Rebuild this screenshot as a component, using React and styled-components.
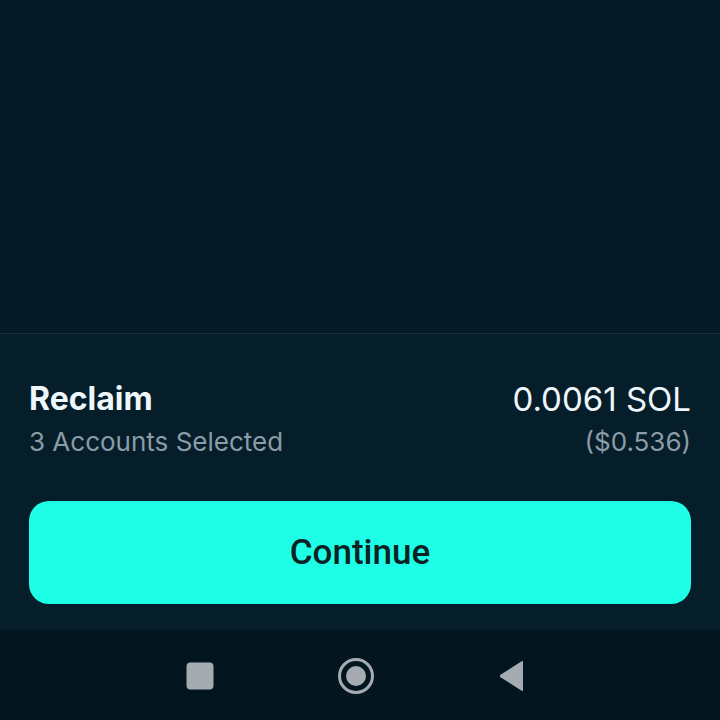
import React from 'react'
import styled, { createGlobalStyle } from 'styled-components'

const GlobalStyle = createGlobalStyle`
  html, body {
    margin: 0;
    padding: 0;
    background: #031922;
  }
  #root {
    height: 720px;
  }
`

const Screen = styled.div`
  width: 720px;
  height: 720px;
  display: flex;
  flex-direction: column;
  font-family: Inter, 'Noto Sans', sans-serif;
  background: #031922;
  overflow: hidden;
`

const Backdrop = styled.div`
  height: 333px;
  background: #041a25;
`

const Sheet = styled.div`
  flex: 1;
  background: #061d2a;
  border-top: 1px solid #14303c;
  padding: 46px 29px 0;
  display: flex;
  flex-direction: column;
`

const SummaryRow = styled.div`
  display: flex;
  justify-content: space-between;
  align-items: flex-start;
`

const Column = styled.div`
  display: flex;
  flex-direction: column;
  align-items: ${p => (p.$right ? 'flex-end' : 'flex-start')};
  gap: 9px;
`

const Title = styled.div`
  color: #eef7fb;
  font-size: ${p => (p.$bold ? 32 : 33)}px;
  font-weight: ${p => (p.$bold ? 700 : 400)};
  line-height: 38px;
`

const Sub = styled.div`
  color: #8a9ca6;
  font-size: 26px;
  line-height: 30px;
`

const ContinueButton = styled.button`
  margin-top: 44px;
  height: 103px;
  border: none;
  border-radius: 20px;
  background: #1efde6;
  color: #0c2325;
  font-family: Roboto, 'Noto Sans', sans-serif;
  font-size: 35px;
  font-weight: 500;
  cursor: pointer;
`

const NavBar = styled.div`
  height: 88px;
  background: #03161f;
  display: flex;
  align-items: center;
  justify-content: center;
  gap: 123px;
  padding: 2px 8px 0 0;
`

const NavIcon = styled.svg`
  display: block;
`

const App = () => {
  return (
    <>
      <GlobalStyle />
      <Screen>
        <Backdrop />
        <Sheet>
          <SummaryRow>
            <Column>
              <Title $bold>Reclaim</Title>
              <Sub>3 Accounts Selected</Sub>
            </Column>
            <Column $right>
              <Title>0.0061 SOL</Title>
              <Sub>($0.536)</Sub>
            </Column>
          </SummaryRow>
          <ContinueButton>Continue</ContinueButton>
        </Sheet>
        <NavBar>
          <NavIcon width="28" height="28" viewBox="0 0 28 28">
            <rect x="0.5" y="0.5" width="27" height="27" rx="4" fill="#a4acb2" />
          </NavIcon>
          <NavIcon width="38" height="38" viewBox="0 0 38 38">
            <circle cx="19" cy="19" r="16.5" fill="none" stroke="#a4acb2" strokeWidth="3" />
            <circle cx="19" cy="19" r="10" fill="#a4acb2" />
          </NavIcon>
          <NavIcon width="28" height="32" viewBox="0 0 28 32">
            <path d="M25 2 L25 30 Q25 31.5 23.6 30.7 L2.5 17.2 Q1.3 16 2.5 14.8 L23.6 1.3 Q25 0.5 25 2 Z" fill="#a4acb2" />
          </NavIcon>
        </NavBar>
      </Screen>
    </>
  )
}

export default App
